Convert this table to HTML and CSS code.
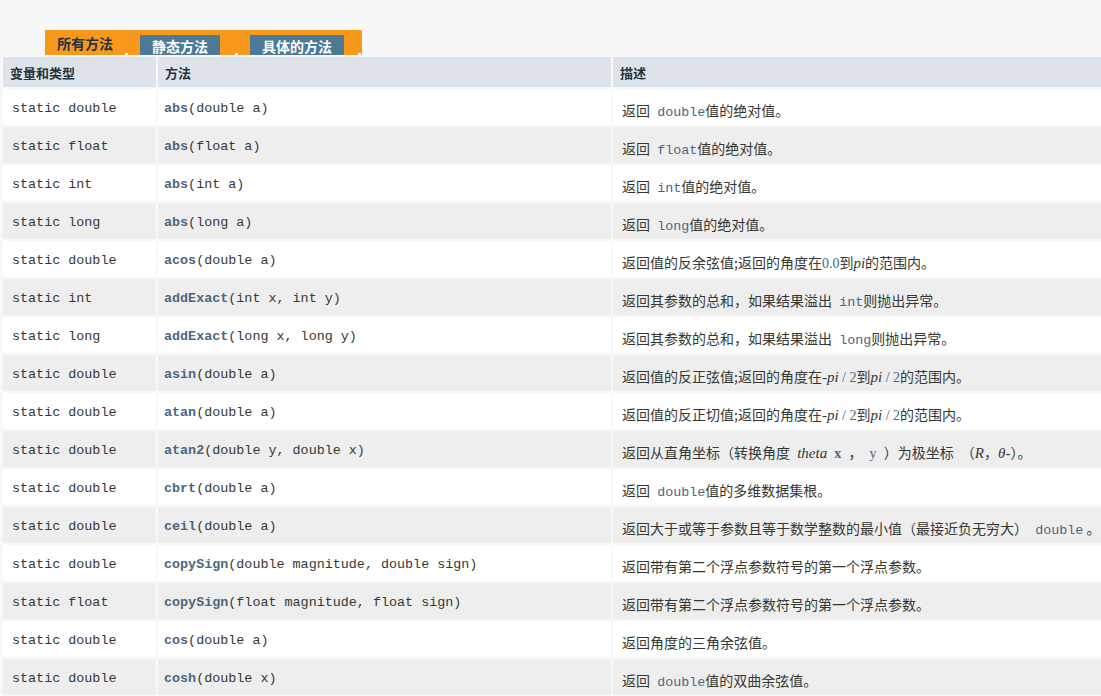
FILE: index.html
```html
<!DOCTYPE html>
<html lang="zh-CN">
<head>
<meta charset="utf-8">
<title>Math 方法摘要</title>
<link rel="stylesheet" href="styles.css">
</head>
<body>
<div class="summary">
  <div class="tabs">
    <span class="tab active">所有方法</span><span class="tab-end e1"></span>
    <span class="tab inactive">静态方法</span><span class="tab-end e2"></span>
    <span class="tab inactive">具体的方法</span><span class="tab-end e3"></span>
  </div>
  <div class="table">
    <div class="row head"><div class="cell">变量和类型</div><div class="cell">方法</div><div class="cell">描述</div></div>

    <div class="row"><div class="cell c1">static double</div><div class="cell c2"><a class="m">abs</a>(double a)</div><div class="cell c3">返回 <code>double</code>值的绝对值。</div></div>
    <div class="row alt"><div class="cell c1">static float</div><div class="cell c2"><a class="m">abs</a>(float a)</div><div class="cell c3">返回 <code>float</code>值的绝对值。</div></div>
    <div class="row"><div class="cell c1">static int</div><div class="cell c2"><a class="m">abs</a>(int a)</div><div class="cell c3">返回 <code>int</code>值的绝对值。</div></div>
    <div class="row alt"><div class="cell c1">static long</div><div class="cell c2"><a class="m">abs</a>(long a)</div><div class="cell c3">返回 <code>long</code>值的绝对值。</div></div>
    <div class="row"><div class="cell c1">static double</div><div class="cell c2"><a class="m">acos</a>(double a)</div><div class="cell c3">返回值的反余弦值;返回的角度在<span class="num">0.0</span>到<i class="math">pi</i>的范围内。</div></div>
    <div class="row alt"><div class="cell c1">static int</div><div class="cell c2"><a class="m">addExact</a>(int x, int y)</div><div class="cell c3">返回其参数的总和，如果结果溢出 <code>int</code>则抛出异常。</div></div>
    <div class="row"><div class="cell c1">static long</div><div class="cell c2"><a class="m">addExact</a>(long x, long y)</div><div class="cell c3">返回其参数的总和，如果结果溢出 <code>long</code>则抛出异常。</div></div>
    <div class="row alt"><div class="cell c1">static double</div><div class="cell c2"><a class="m">asin</a>(double a)</div><div class="cell c3">返回值的反正弦值;返回的角度在<i class="math">-pi</i><span class="num"> / 2</span>到<i class="math">pi</i><span class="num"> / 2</span>的范围内。</div></div>
    <div class="row"><div class="cell c1">static double</div><div class="cell c2"><a class="m">atan</a>(double a)</div><div class="cell c3">返回值的反正切值;返回的角度在<i class="math">-pi</i><span class="num"> / 2</span>到<i class="math">pi</i><span class="num"> / 2</span>的范围内。</div></div>
    <div class="row alt"><div class="cell c1">static double</div><div class="cell c2"><a class="m">atan2</a>(double y, double x)</div><div class="cell c3">返回从直角坐标（转换角度 <i class="math">theta</i> <span class="num b">x</span> ， <span class="num">y</span> ）为极坐标 （<i class="math">R</i>，<i class="math">θ-</i>）。</div></div>
    <div class="row"><div class="cell c1">static double</div><div class="cell c2"><a class="m">cbrt</a>(double a)</div><div class="cell c3">返回 <code>double</code>值的多维数据集根。</div></div>
    <div class="row alt"><div class="cell c1">static double</div><div class="cell c2"><a class="m">ceil</a>(double a)</div><div class="cell c3">返回大于或等于参数且等于数学整数的最小值（最接近负无穷大） <code>double</code><span class="tight"> 。</span></div></div>
    <div class="row"><div class="cell c1">static double</div><div class="cell c2"><a class="m">copySign</a>(double magnitude, double sign)</div><div class="cell c3">返回带有第二个浮点参数符号的第一个浮点参数。</div></div>
    <div class="row alt"><div class="cell c1">static float</div><div class="cell c2"><a class="m">copySign</a>(float magnitude, float sign)</div><div class="cell c3">返回带有第二个浮点参数符号的第一个浮点参数。</div></div>
    <div class="row"><div class="cell c1">static double</div><div class="cell c2"><a class="m">cos</a>(double a)</div><div class="cell c3">返回角度的三角余弦值。</div></div>
    <div class="row alt"><div class="cell c1">static double</div><div class="cell c2"><a class="m">cosh</a>(double x)</div><div class="cell c3">返回 <code>double</code>值的双曲余弦值。</div></div>
  </div>
</div>
</body>
</html>
```

FILE: styles.css
```css
html, body {
  margin: 0;
  padding: 0;
  overflow: hidden;
  background: #f8f8f8;
  color: #353833;
  font-family: "Noto Sans CJK SC", "Liberation Sans", sans-serif;
}

.summary {
  padding-top: 30px;
}

/* ---------- tab strip ---------- */
.tabs {
  display: flex;
  align-items: flex-start;
  width: max-content;
  height: 25px;
  margin-left: 45px;
  padding-right: 1px;
  background: #f8981d;
}

.tab {
  box-sizing: border-box;
  height: 25px;
  padding: 3px 12px 0;
  font: bold 14px/20px "Noto Sans CJK SC", sans-serif;
  white-space: nowrap;
  overflow: hidden;
}

.tab.active {
  color: #253441;
}

.tab.inactive {
  height: 20px;
  margin-top: 5px;
  line-height: 17px;
  background: #4d7a97;
  color: #ffffff;
}

.tab-end {
  align-self: flex-end;
  width: 3px;
  height: 2px;
  background: #ffffff;
}

.tab-end.e1 { margin-right: 12px; }
.tab-end.e2 { margin-left: 15px; margin-right: 12px; }
.tab-end.e3 { margin-left: 14px; }

/* ---------- table ---------- */
.table {
  display: flex;
  flex-direction: column;
  gap: 2px;
  margin: 2px 0 0 3px;
}

.row {
  display: grid;
  grid-template-columns: 153px 453px 488px;
  column-gap: 2px;
  height: 36px;
}

.cell {
  box-sizing: border-box;
  height: 100%;
  background: #ffffff;
  white-space: nowrap;
  overflow: hidden;
}

.row.alt .cell {
  background: #eeeeef;
}

.row.head {
  height: 30px;
}

.row.head .cell {
  background: #dee3e9;
  padding: 7px 0 0 7px;
  font: bold 13px/18px "Noto Sans CJK SC", sans-serif;
  color: #253441;
}

.c1, .c2 {
  padding-top: 12px;
  font: 13.4px/16px "Liberation Mono", monospace;
  color: #353833;
}

.c1 { padding-left: 9px; }
.c2 { padding-left: 6px; }

.m {
  font-weight: bold;
  color: #4a6782;
  text-decoration: none;
}

.c3 {
  padding: 11px 0 0 9px;
  font: 14px/20px "Noto Sans CJK SC", sans-serif;
  word-spacing: 4px;
  color: #353833;
}

.c3 code {
  font: 13.4px "Liberation Mono", monospace;
  color: #4a6782;
  word-spacing: 0;
}

.tight {
  word-spacing: 0;
}

.math {
  font-family: "Liberation Serif", serif;
  font-style: italic;
  font-size: 15px;
  color: #353833;
  word-spacing: 0;
}

.num {
  font-family: "Liberation Serif", serif;
  font-size: 14px;
  color: #4a6782;
  word-spacing: 0;
}

.num.b {
  font-weight: bold;
}
```
